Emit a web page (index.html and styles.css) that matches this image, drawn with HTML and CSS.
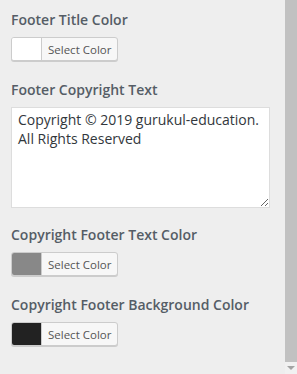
FILE: index.html
```html
<!DOCTYPE html>
<html lang="en">
<head>
    <meta charset="UTF-8">
    <meta name="viewport" content="width=device-width, initial-scale=1.0">
    <title>Footer Settings</title>
    <link rel="stylesheet" href="styles.css">
</head>
<body>

    <div class="panel">
        <div class="controls">

            <!-- Footer title colour -->
            <div class="field">
                <span class="field-title">Footer Title Color</span>
                <button class="color-picker">
                    <span class="swatch swatch-white"></span>
                    <span class="picker-label">Select Color</span>
                </button>
            </div>

            <!-- Copyright text -->
            <div class="field field-text">
                <span class="field-title">Footer Copyright Text</span>
                <textarea class="copyright-text">Copyright © 2019 gurukul-education. All Rights Reserved</textarea>
            </div>

            <div class="field">
                <span class="field-title">Copyright Footer Text Color</span>
                <button class="color-picker">
                    <span class="swatch swatch-grey"></span>
                    <span class="picker-label">Select Color</span>
                </button>
            </div>

            <div class="field">
                <span class="field-title">Copyright Footer Background Color</span>
                <button class="color-picker">
                    <span class="swatch swatch-dark"></span>
                    <span class="picker-label">Select Color</span>
                </button>
            </div>

        </div>

        <!-- fake scrollbar -->
        <div class="scrollbar">
            <div class="scroll-thumb"></div>
            <div class="scroll-arrow"></div>
        </div>
    </div>

</body>
</html>
```

FILE: styles.css
```css
:root {
    --bg-color: #eeeeee;
    --title-color: #555d66;
    --text-color: #32373c;
    --border-color: #cccccc;
}

* {
    box-sizing: border-box;
    margin: 0;
    padding: 0;
}

body {
    font-family: 'Open Sans', 'Noto Sans', sans-serif;
    background-color: var(--bg-color);
    color: var(--text-color);
    height: 374px;
    overflow: hidden;
}

.panel {
    display: flex;
    height: 100%;
}

.controls {
    flex: 1;
    padding: 10px 15px 0 11px;
}

.field {
    display: flex;
    flex-direction: column;
    align-items: flex-start;
    margin-bottom: 19px;
}

.field-text {
    margin-bottom: 17px;
}

.field-title {
    display: block;
    font-size: 14px;
    font-weight: 600;
    line-height: 20px;
    color: var(--title-color);
    margin-bottom: 7px;
    white-space: nowrap;
}

.color-picker {
    display: flex;
    height: 24px;
    border: 1px solid var(--border-color);
    border-radius: 3px;
    background-color: #f7f7f7;
    box-shadow: 0 1px 0 #cccccc;
    overflow: hidden;
    font-family: inherit;
    cursor: pointer;
}

.swatch {
    width: 30px;
    height: 100%;
    border-right: 1px solid var(--border-color);
}

.swatch-white { background-color: #ffffff; }
.swatch-grey { background-color: #888888; }
.swatch-dark { background-color: #222222; }

.picker-label {
    display: flex;
    align-items: center;
    padding: 0 6px 0 6px;
    font-size: 11.5px;
    color: #555555;
    white-space: nowrap;
}

.copyright-text {
    display: block;
    width: 259px;
    height: 101px;
    padding: 2px 6px;
    border: 1px solid #dddddd;
    background: #ffffff;
    font-family: inherit;
    font-size: 14px;
    line-height: 19px;
    color: var(--text-color);
    resize: vertical;
}

.scrollbar {
    width: 12px;
    display: flex;
    flex-direction: column;
    background-color: #f1f1f1;
}

.scroll-thumb {
    flex: 1;
    background-color: #c1c1c1;
    margin-bottom: 4px;
}

.scroll-arrow {
    height: 8px;
    display: flex;
    justify-content: center;
    align-items: flex-start;
}

.scroll-arrow::before {
    content: "";
    border-left: 4px solid transparent;
    border-right: 4px solid transparent;
    border-top: 4px solid #a3a3a3;
}
```
